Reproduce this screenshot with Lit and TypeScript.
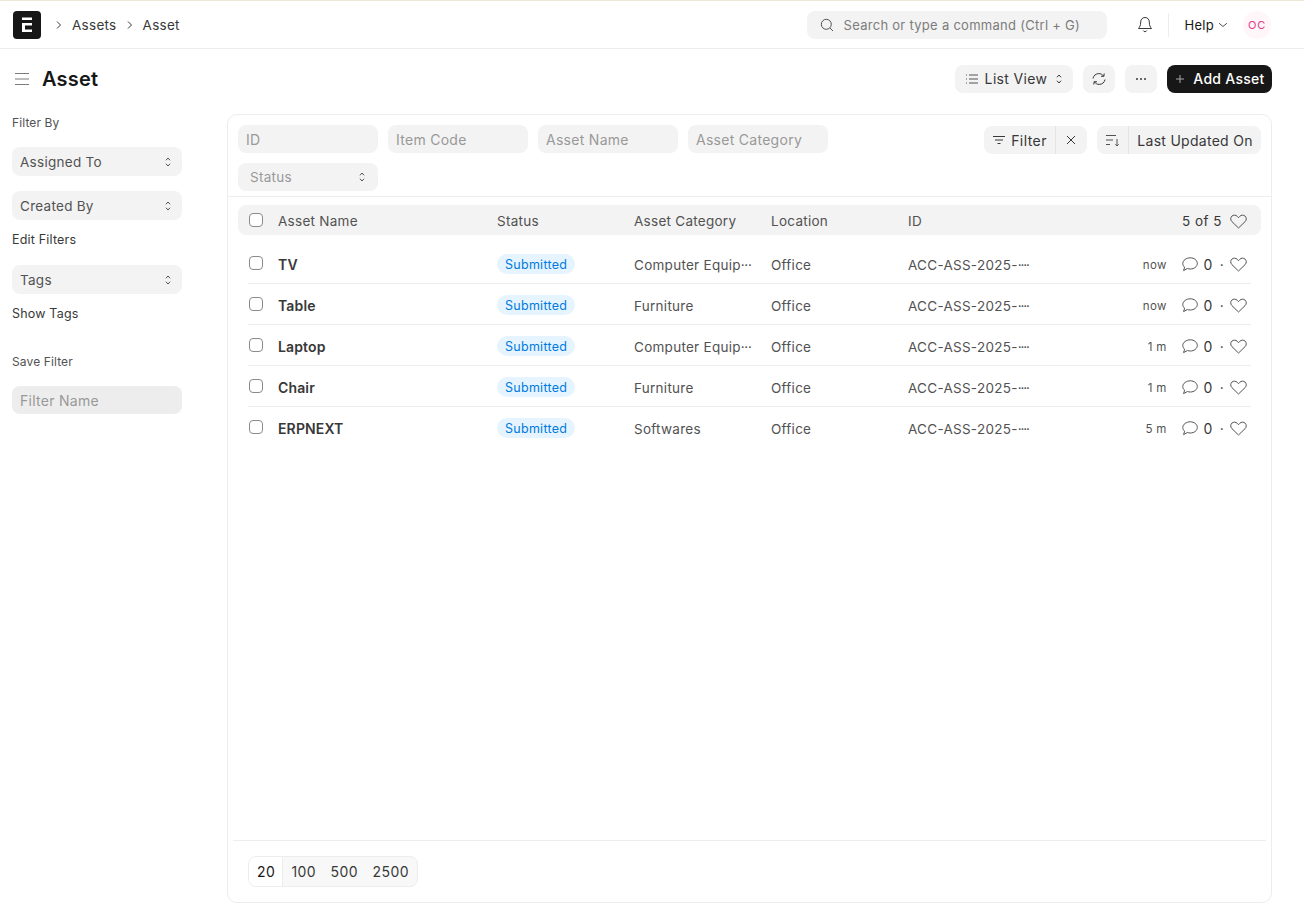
import { LitElement, css, html } from 'lit';
import { customElement } from 'lit/decorators.js';

const updown = html`<svg class="updown" width="8" height="12" viewBox="0 0 8 12" fill="none" stroke="currentColor" stroke-width="1" stroke-linecap="round" stroke-linejoin="round"><path d="M2.200 4 4 2 5.800 4M2.200 8 4 10 5.800 8"/></svg>`;
const heart = html`<svg width="17" height="15" viewBox="0 0 17 15" fill="none" stroke="#525252" stroke-width="1" stroke-linejoin="round"><path d="M8.500 14 1.900 7.600C.3 6 .4 3.500 1.900 2.100 3.500.7 5.900.9 7.300 2.400l1.200 1.300 1.200-1.300C11.100.9 13.500.7 15.100 2.100c1.500 1.400 1.600 3.900 0 5.500z"/></svg>`;
const comment = html`<svg width="16" height="15" viewBox="0 0 16 15" fill="none" stroke="#525252" stroke-width="1" stroke-linejoin="round"><path d="M8.300.8c3.900 0 7 2.500 7 5.600S12.200 12 8.300 12c-1 0-2-.2-2.900-.5L1.600 13.600l1-3.400C1.400 9.200.8 7.900.8 6.400.8 3.300 4.400.8 8.300.8z"/></svg>`;

const rows = [
  { name: 'TV', category: 'Computer Equip', more: true, age: 'now' },
  { name: 'Table', category: 'Furniture', more: false, age: 'now' },
  { name: 'Laptop', category: 'Computer Equip', more: true, age: '1 m' },
  { name: 'Chair', category: 'Furniture', more: false, age: '1 m' },
  { name: 'ERPNEXT', category: 'Softwares', more: false, age: '5 m' },
];

@customElement('app-root')
export class AppRoot extends LitElement {
  static styles = css`
    :host {
      display: block;
      height: 903px;
      overflow: hidden;
      background: #fff;
      font-family: Inter, "Noto Sans", sans-serif;
      color: #171717;
      font-size: 14px;
      letter-spacing: 0.02em;
    }
    * { box-sizing: border-box; }
    svg { display: block; flex: none; }

    .navbar {
      height: 49px;
      border-top: 1px solid #f0e6d6;
      border-bottom: 1px solid #ededed;
      display: flex;
      align-items: center;
      padding: 0 33px 0 13px;
    }
    .logo { margin-right: 14px; }
    .crumb { display: flex; align-items: center; gap: 9px; color: #383838; margin-right: 9px; font-size: 13.5px; }
    .search {
      margin-left: auto;
      width: 300px;
      height: 28px;
      background: #f3f3f3;
      border-radius: 8px;
      display: flex;
      align-items: center;
      gap: 10px;
      padding-left: 13px;
      font-size: 13px;
      color: #7c7c7c;
    }
    .bell { margin-left: 30px; }
    .divider { width: 1px; height: 24px; background: #ededed; margin: 0 16px 0 15px; }
    .help { display: flex; align-items: center; gap: 4px; font-size: 13px; color: #171717; }
    .avatar {
      width: 28px;
      height: 28px;
      border-radius: 50%;
      background: #fff6fa;
      color: #e0408a;
      font-size: 11px;
      display: flex;
      align-items: center;
      justify-content: center;
      margin-left: 15px;
      letter-spacing: 0.08em;
    }

    .page-head {
      height: 65px;
      display: flex;
      align-items: center;
      padding: 0 32px 6px 15px;
    }
    .page-head h1 {
      margin: 0 0 0 13px;
      font-size: 20px;
      font-weight: 600;
      letter-spacing: 0.01em;
      flex: 1;
    }
    .btn {
      height: 28px;
      background: #f3f3f3;
      border-radius: 8px;
      display: flex;
      align-items: center;
      justify-content: center;
      color: #383838;
      margin-left: 10px;
    }
    .view-btn { width: 118px; gap: 7px; letter-spacing: 0.025em; }
    .view-btn span { margin: 0 1px 0 -1px; }
    .icon-btn { width: 32px; }
    .primary {
      width: 105px;
      background: #171717;
      color: #fff;
      font-weight: 500;
      gap: 8px;
      padding-left: 1px;
    }

    .layout { display: flex; align-items: flex-start; padding: 0 32px 0 12px; }
    .sidebar { width: 170px; margin-right: 45px; flex: none; }
    .side-label { font-size: 12px; color: #525252; line-height: 18px; letter-spacing: 0.01em; }
    .side-link { font-size: 12.5px; color: #383838; line-height: 18px; letter-spacing: 0.015em; }
    .side-select {
      height: 29px;
      background: #f3f3f3;
      border-radius: 8px;
      display: flex;
      align-items: center;
      justify-content: space-between;
      padding: 0 10px 0 8px;
      color: #525252;
      font-size: 13.5px;
    }
    .side-input {
      height: 28px;
      background: #ededed;
      border-radius: 8px;
      display: flex;
      align-items: center;
      padding: 1px 0 0 8px;
      color: #999;
    }

    .card {
      flex: 1;
      height: 789px;
      border: 1px solid #ededed;
      border-radius: 10px;
      display: flex;
      flex-direction: column;
    }
    .filters {
      height: 82px;
      border-bottom: 1px solid #ededed;
      padding: 10px 10px 0 10px;
      display: flex;
      justify-content: space-between;
      flex: none;
    }
    .fields { display: flex; flex-wrap: wrap; gap: 10px; width: 620px; align-content: flex-start; }
    .field {
      width: 140px;
      height: 28px;
      background: #f3f3f3;
      border-radius: 8px;
      display: flex;
      align-items: center;
      justify-content: space-between;
      padding: 0 12px 0 8px;
      color: #999;
    }
    .field.status { padding-left: 12px; font-size: 13.5px; }
    .field.status svg { color: #525252; }
    .filter-actions { display: flex; gap: 10px; padding-top: 1px; }
    .group {
      height: 28px;
      background: #f3f3f3;
      border-radius: 8px;
      display: flex;
      align-items: stretch;
      color: #383838;
    }
    .group > div { display: flex; align-items: center; justify-content: center; }
    .group > div + div { border-left: 1px solid #e4e4e4; }
    .g-filter { width: 71px; gap: 5px; letter-spacing: 0.03em; }
    .g-clear { width: 32px; padding-right: 2px; }
    .g-sort { width: 31px; }
    .g-field { width: 133px; }

    .list { padding: 8px 10px 0 10px; flex: 1; }
    .head {
      height: 30px;
      background: #f3f3f3;
      border-radius: 8px;
      padding: 0 10px;
      margin-bottom: 8px;
      color: #525252;
    }
    .head > div:not(.check) { padding-top: 2px; }
    .cols {
      display: grid;
      grid-template-columns: 30px 219px 137px 137px 137px 1fr;
      align-items: center;
      font-size: 13.5px;
      letter-spacing: 0.02em;
    }
    .check {
      width: 14px;
      height: 14px;
      border: 1px solid #8a8a8a;
      border-radius: 4px;
      background: #fff;
      margin-left: 1px;
    }
    .side-meta { display: flex; align-items: center; justify-content: flex-end; }
    .head .meta-right { gap: 8px; font-size: 13.5px; letter-spacing: 0.035em; }
    .row {
      height: 41px;
      border-bottom: 1px solid #ededed;
      margin: 0 10px;
      padding-top: 2px;
      color: #525252;
    }
    .row:last-child { border-bottom-color: transparent; }
    .row .check { margin-bottom: 2px; }
    .row .cell { padding-top: 2px; }
    .name { font-weight: 600; color: #383838; font-size: 14px; letter-spacing: 0.01em; }
    .status-cell { display: flex; }
    .pill {
      display: flex;
      align-items: center;
      height: 20px;
      padding: 0 8px;
      border-radius: 10px;
      background: #e6f4ff;
      color: #007be0;
      font-size: 12.5px;
    }
    .more { letter-spacing: -0.08em; }
    .more.wide { letter-spacing: -0.02em; }
    .age { font-size: 11.5px; color: #525252; margin-right: 15px; padding-top: 2px; }
    .meta-right { padding-right: 4px; color: #383838; font-size: 14px; }
    .count { margin: 0 7px 0 6px; }
    .dot { margin-right: 6px; }

    .pager { height: 62px; margin: 0 5px; border-top: 1px solid #ededed; padding: 15px 15px 0; flex: none; }
    .pages {
      display: inline-flex;
      height: 31px;
      border: 1px solid #ededed;
      border-radius: 8px;
      background: #f8f8f8;
      overflow: hidden;
      color: #383838;
      letter-spacing: 0.03em;
    }
    .pages span { display: flex; align-items: center; padding: 0 7.250px; }
    .pages span:first-child { background: #fff; border-right: 1px solid #ededed; padding: 0 7px 0 8px; margin-right: 1px; color: #171717; }
    .pages span:last-child { padding-right: 8px; }
  `;

  private renderRow(r: { name: string; category: string; more: boolean; age: string }) {
    return html`
      <div class="row cols">
        <div class="check"></div>
        <div class="name">${r.name}</div>
        <div class="status-cell"><span class="pill">Submitted</span></div>
        <div class="cell">${r.category}${r.more ? html`<span class="more wide">···</span>` : ''}</div>
        <div class="cell">Office</div>
        <div class="side-meta" style="justify-content:space-between">
          <span class="cell">ACC-ASS-2025-<span class="more">····</span></span>
          <span class="side-meta meta-right">
            <span class="age">${r.age}</span>
            ${comment}<span class="count">0</span><span class="dot">·</span>${heart}
          </span>
        </div>
      </div>
    `;
  }

  render() {
    return html`
      <div class="navbar">
        <svg class="logo" width="28" height="28" viewBox="0 0 28 28">
          <rect width="28" height="28" rx="4" fill="#171717"/>
          <path d="M9 6.500h10V9H9zM9 12h10v2.500h-7v4h7V21H9z" fill="#fff"/>
        </svg>
        <div class="crumb">
          <svg width="8" height="10" viewBox="0 0 8 10" fill="none" stroke="#383838" stroke-width="1"><path d="M2 1.500 5.500 5 2 8.500"/></svg>
          <span>Assets</span>
        </div>
        <div class="crumb">
          <svg width="8" height="10" viewBox="0 0 8 10" fill="none" stroke="#383838" stroke-width="1"><path d="M2 1.500 5.500 5 2 8.500"/></svg>
          <span>Asset</span>
        </div>
        <div class="search">
          <svg width="14" height="14" viewBox="0 0 14 14" fill="none" stroke="#525252" stroke-width="1"><circle cx="6.300" cy="6.300" r="5"/><path d="m10 10 3 3"/></svg>
          <span>Search or type a command (Ctrl + G)</span>
        </div>
        <svg class="bell" width="16" height="17" viewBox="0 0 16 17" fill="none" stroke="#383838" stroke-width="1" stroke-linejoin="round"><path d="M8 1.500c-2.700 0-4.300 2-4.300 4.500 0 3.500-1 5-2.200 6.500h13C13.300 11 12.300 9.500 12.300 6c0-2.500-1.600-4.500-4.300-4.500zM6.200 14.500c.4.800 1 1.200 1.800 1.200s1.400-.4 1.800-1.200"/></svg>
        <div class="divider"></div>
        <div class="help">
          <span>Help</span>
          <svg width="10" height="6" viewBox="0 0 10 6" fill="none" stroke="#525252" stroke-width="1"><path d="m1 1.200 4 3.300 4-3.300"/></svg>
        </div>
        <div class="avatar">OC</div>
      </div>

      <div class="page-head">
        <svg width="14" height="14" viewBox="0 0 14 14" stroke="#7c7c7c" stroke-width="1.200"><path d="M0 1.500h14M0 7h14M0 12.500h14"/></svg>
        <h1>Asset</h1>
        <div class="btn view-btn">
          <svg width="14" height="12" viewBox="0 0 14 12" fill="none" stroke="#525252" stroke-width="1"><path d="M4 2h9M4 6h9M4 10h9M1 2h1M1 6h1M1 10h1"/></svg>
          <span>List View</span>
          ${updown}
        </div>
        <div class="btn icon-btn">
          <svg width="16" height="14" viewBox="0 0 16 14" fill="none" stroke="#383838" stroke-width="1" stroke-linejoin="round"><path d="M2 6.500C2.400 3.700 4.800 1.600 7.800 1.600c2 0 3.700.9 4.800 2.400M14 7.500c-.4 2.800-2.800 4.900-5.800 4.900-2 0-3.700-.9-4.800-2.400M13.200 1.500 12.900 4.400 10 4.200M2.800 12.500 3.100 9.600 6 9.800"/></svg>
        </div>
        <div class="btn icon-btn">
          <svg width="12" height="4" viewBox="0 0 12 4" fill="#383838"><circle cx="2" cy="2" r="1"/><circle cx="6" cy="2" r="1"/><circle cx="10" cy="2" r="1"/></svg>
        </div>
        <div class="btn primary">
          <svg width="10" height="10" viewBox="0 0 10 10" stroke="#a8a8a8" stroke-width="1"><path d="M5 1v8M1 5h8"/></svg>
          <span>Add Asset</span>
        </div>
      </div>

      <div class="layout">
        <div class="sidebar">
          <div class="side-label">Filter By</div>
          <div class="side-select" style="margin-top:15px"><span>Assigned To</span>${updown}</div>
          <div class="side-select" style="margin-top:15px"><span>Created By</span>${updown}</div>
          <div class="side-link" style="margin-top:11px">Edit Filters</div>
          <div class="side-select" style="margin-top:16px"><span>Tags</span>${updown}</div>
          <div class="side-link" style="margin-top:11px">Show Tags</div>
          <div class="side-label" style="margin-top:30px">Save Filter</div>
          <div class="side-input" style="margin-top:15px">Filter Name</div>
        </div>

        <div class="card">
          <div class="filters">
            <div class="fields">
              <div class="field">ID</div>
              <div class="field">Item Code</div>
              <div class="field">Asset Name</div>
              <div class="field">Asset Category</div>
              <div class="field status"><span>Status</span>${updown}</div>
            </div>
            <div class="filter-actions">
              <div class="group">
                <div class="g-filter">
                  <svg width="14" height="10" viewBox="0 0 14 10" stroke="#383838" stroke-width="1"><path d="M1 1.500h12M3 5h8M5.500 8.500h3"/></svg>
                  <span>Filter</span>
                </div>
                <div class="g-clear">
                  <svg width="10" height="10" viewBox="0 0 10 10" stroke="#383838" stroke-width="1"><path d="m1 1 8 8M9 1 1 9"/></svg>
                </div>
              </div>
              <div class="group">
                <div class="g-sort">
                  <svg width="15" height="13" viewBox="0 0 15 13" fill="none" stroke="#525252" stroke-width="1"><path d="M1 1.500h10M1 6h7M1 10.500h4M12 5v7M10.300 10.300 12 12l1.700-1.700"/></svg>
                </div>
                <div class="g-field">Last Updated On</div>
              </div>
            </div>
          </div>

          <div class="list">
            <div class="head cols">
              <div class="check"></div>
              <div>Asset Name</div>
              <div>Status</div>
              <div>Asset Category</div>
              <div>Location</div>
              <div class="side-meta" style="justify-content:space-between">
                <span>ID</span>
                <span class="side-meta meta-right"><span>5 of 5</span>${heart}</span>
              </div>
            </div>
            ${rows.map((r) => this.renderRow(r))}
          </div>

          <div class="pager">
            <div class="pages"><span>20</span><span>100</span><span>500</span><span>2500</span></div>
          </div>
        </div>
      </div>
    `;
  }
}
